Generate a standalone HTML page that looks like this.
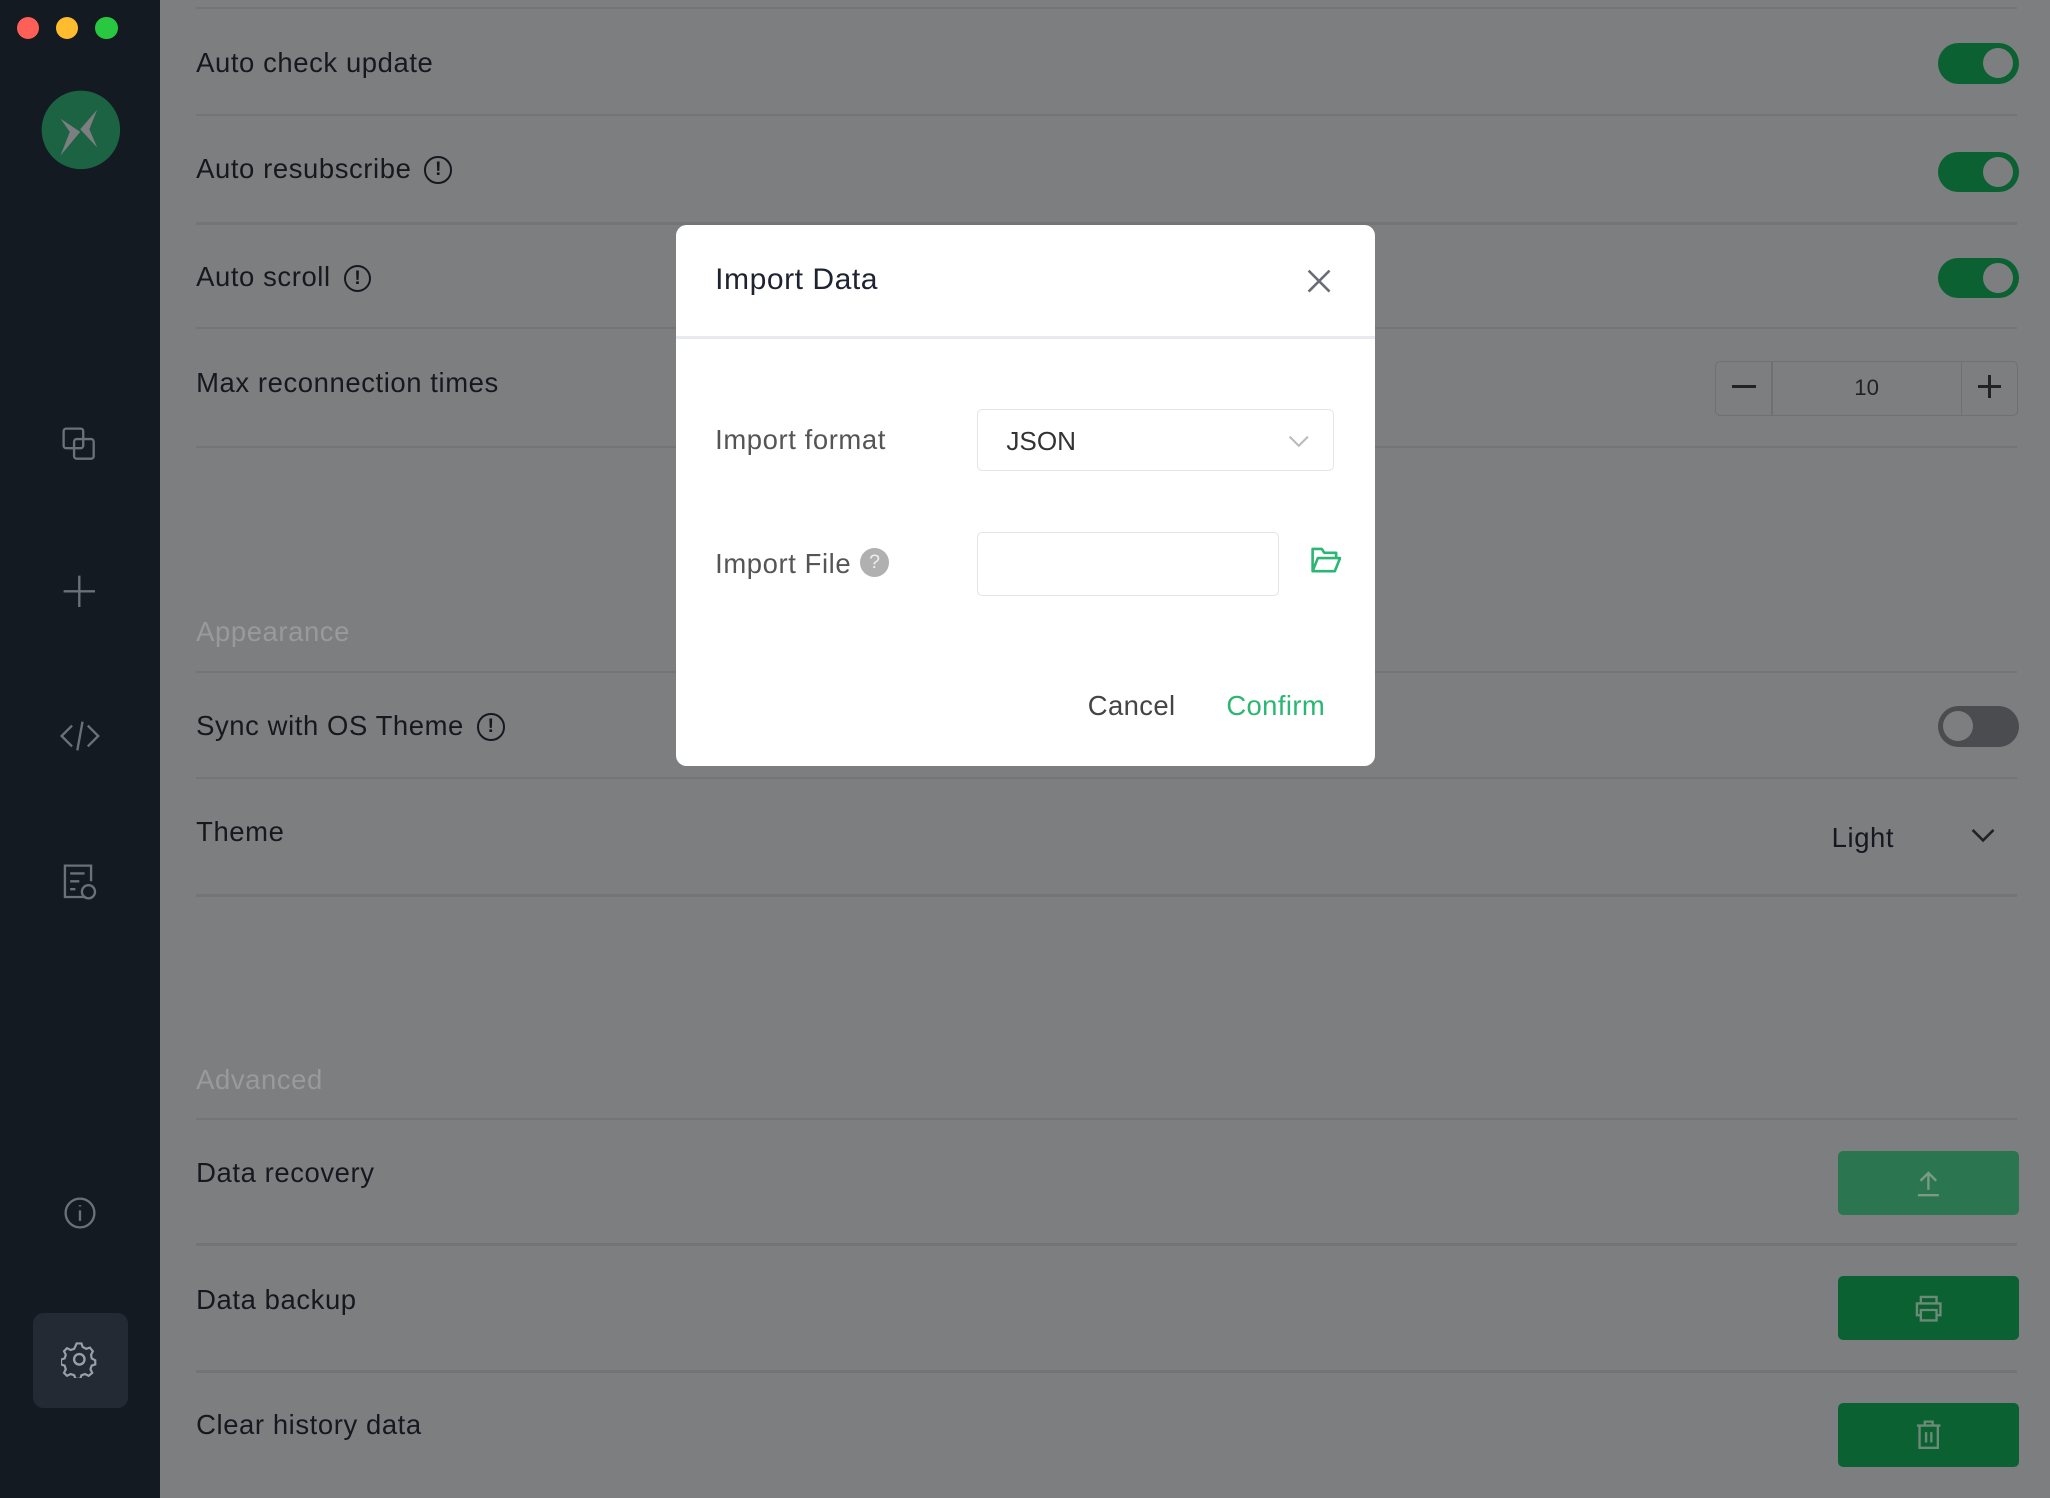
<!DOCTYPE html>
<html><head><style>
html,body{margin:0;padding:0;background:#7d7e80;overflow:hidden}
body{width:2050px;height:1498px}
#w{zoom:1.30740;width:1568px;height:1146px;position:relative;font-family:"Liberation Sans",sans-serif;color:#15191f}
.side{position:absolute;left:0;top:0;width:122px;height:1146px;background:#141a21}
.main{position:absolute;left:122px;top:0;right:0;bottom:0;background:#7d7e80}
.t{position:absolute;left:150px;font-size:21px;letter-spacing:0.45px;color:#15191f}
.h{position:absolute;left:150px;font-size:21px;letter-spacing:0.45px;color:#999a9c}
.ln{position:absolute;left:150px;right:25px;height:2px;background:#737476}
.tg{position:absolute;left:1482px;width:62px;height:31px;border-radius:16px;background:#0b6131}
.tg:after{content:"";position:absolute;right:4px;top:4px;width:23px;height:23px;border-radius:50%;background:#7d7e80}
.tg.off{background:#4a4c50}
.tg.off:after{left:4px;right:auto}
.btn{position:absolute;left:1406px;width:138px;height:49px;border-radius:4px;background:#0b6131}
.ic{position:absolute;stroke:#6b7079;fill:none;stroke-width:1.8}
.info{display:inline-block;width:18px;height:18px;border:2px solid #15191f;border-radius:50%;font-size:15px;text-align:center;line-height:18px;font-weight:bold;vertical-align:2px;margin-left:10px;letter-spacing:0}
.dlg{position:absolute;left:517px;top:172px;width:535px;height:414px;background:#fff;border-radius:8px}
.dl{position:absolute;left:30px;font-size:21px;letter-spacing:0.45px;color:#555}
</style></head><body><div id="w">
<div class="side">
<div style="position:absolute;left:13px;top:13px;width:17px;height:17px;border-radius:50%;background:#fe5f57"></div>
<div style="position:absolute;left:43px;top:13px;width:17px;height:17px;border-radius:50%;background:#febc2e"></div>
<div style="position:absolute;left:73px;top:13px;width:17px;height:17px;border-radius:50%;background:#28c840"></div>
<svg style="position:absolute;left:31px;top:69px" width="61" height="61" viewBox="0 0 61 61"><circle cx="30.5" cy="30.5" r="30" fill="#1b6343"/><path d="M15 22 L30 32 L15 50 L22 32 Z M43 15 L30 30 L43 44 L37 30 Z" fill="#7d7e80"/></svg>
<svg class="ic" style="left:47px;top:326px" width="28" height="28"><rect x="2" y="2" width="15" height="15" rx="2"/><rect x="10" y="10" width="15" height="15" rx="2"/></svg>
<svg class="ic" style="left:47px;top:438px" width="28" height="28"><path d="M14 2V26M2 14H26"/></svg>
<svg class="ic" style="left:45px;top:550px" width="32" height="26"><path d="M10 5L2 13L10 21M22 5L30 13L22 21M18 2L14 24"/></svg>
<svg class="ic" style="left:47px;top:660px" width="28" height="30"><path d="M19 26H3V2H23V14M7 8H18M7 14H14M7 20H11"/><circle cx="21" cy="22" r="5"/></svg>
<svg class="ic" style="left:48px;top:915px" width="26" height="26"><circle cx="13" cy="13" r="11"/><path d="M13 11V19M13 7V8"/></svg>
<div style="position:absolute;left:25px;top:1004px;width:73px;height:73px;border-radius:8px;background:#232a33"></div>
<svg style="position:absolute;left:47px;top:1026px" width="28" height="28" viewBox="0 0 28 28"><path d="M12 2h4l1 3 3 1.5 3-1 2.5 3-1.5 3 .5 3 3 1.5v3.5l-3 1-1 3 1.5 3-3 2.5-3-1.5-3 1-1 3h-4l-1-3-3-1-3 1.5-2.5-2.5 1.5-3-1-3-3-1v-4l3-1 1-3-1.5-3 2.5-2.5 3 1.5 3-1z" transform="scale(0.92) translate(1 0)" stroke="#9aa0a8" stroke-width="1.8" fill="none"/><circle cx="14" cy="14" r="4" stroke="#9aa0a8" stroke-width="1.8" fill="none"/></svg>
</div>
<div class="main"></div>
<div class="ln" style="top:5px"></div>
<div class="t" style="top:36px">Auto check update</div><div class="tg" style="top:33px"></div>
<div class="ln" style="top:87px"></div>
<div class="t" style="top:117px">Auto resubscribe<span class="info">!</span></div><div class="tg" style="top:116px"></div>
<div class="ln" style="top:170px"></div>
<div class="t" style="top:200px">Auto scroll<span class="info">!</span></div><div class="tg" style="top:197px"></div>
<div class="ln" style="top:250px"></div>
<div class="t" style="top:281px">Max reconnection times</div>
<div style="position:absolute;left:1312px;top:276px;width:230px;height:41px;border:1px solid #6f7072;border-radius:4px">
<div style="position:absolute;left:42px;top:0;width:1px;height:41px;background:#6f7072"></div>
<div style="position:absolute;left:187px;top:0;width:1px;height:41px;background:#6f7072"></div>
<div style="position:absolute;left:12px;top:18px;width:18px;height:2px;background:#222"></div>
<div style="position:absolute;left:0;width:230px;top:10px;text-align:center;font-size:17px;color:#222">10</div>
<div style="position:absolute;left:200px;top:18px;width:18px;height:2px;background:#222"></div>
<div style="position:absolute;left:208px;top:10px;width:2px;height:18px;background:#222"></div>
</div>
<div class="ln" style="top:341px"></div>
<div class="h" style="top:471px">Appearance</div>
<div class="ln" style="top:513px"></div>
<div class="t" style="top:543px">Sync with OS Theme<span class="info">!</span></div><div class="tg off" style="top:540px"></div>
<div class="ln" style="top:594px"></div>
<div class="t" style="top:624px">Theme</div>
<div class="t" style="left:1401px;top:629px">Light</div>
<svg style="position:absolute;left:1507px;top:632px" width="20" height="14"><path d="M2 3L10 11L18 3" stroke="#222" stroke-width="2" fill="none"/></svg>
<div class="ln" style="top:684px"></div>
<div class="h" style="top:814px">Advanced</div>
<div class="ln" style="top:855px"></div>
<div class="t" style="top:885px">Data recovery</div>
<div class="btn" style="top:880px;background:#2b7550"></div>
<svg style="position:absolute;left:1464px;top:894px" width="22" height="22"><path d="M3 20H19M11 16V3M5 9L11 3L17 9" stroke="#7a9b88" stroke-width="1.8" fill="none"/></svg>
<div class="ln" style="top:951px"></div>
<div class="t" style="top:982px">Data backup</div>
<div class="btn" style="top:976px"></div>
<svg style="position:absolute;left:1463px;top:989px" width="24" height="24"><path d="M6 8V3H18V8M6 17H3V8H21V17H18M6 13H18V21H6Z" stroke="#6c8a78" stroke-width="1.8" fill="none"/></svg>
<div class="ln" style="top:1048px"></div>
<div class="t" style="top:1078px">Clear history data</div>
<div class="btn" style="top:1073px"></div>
<svg style="position:absolute;left:1463px;top:1085px" width="24" height="24"><path d="M3 5H21M9 5V2H15V5M5 5V22H19V5M10 10V18M14 10V18" stroke="#6c8a78" stroke-width="1.8" fill="none"/></svg>
<div class="dlg">
<div style="position:absolute;left:30px;top:29px;font-size:23px;letter-spacing:0.4px;color:#1d2330">Import Data</div>
<svg style="position:absolute;left:482px;top:33px" width="20" height="20"><path d="M2 2L18 18M18 2L2 18" stroke="#6a6d75" stroke-width="2"/></svg>
<div style="position:absolute;left:0;right:0;top:85px;height:2px;background:#e8eaef"></div>
<div class="dl" style="top:152px">Import format</div>
<div style="position:absolute;left:230px;top:141px;width:272px;height:46px;border:1px solid #e3e5ea;border-radius:4px">
<div style="position:absolute;left:22px;top:12px;font-size:20px;color:#333">JSON</div>
<svg style="position:absolute;left:237px;top:18px" width="18" height="12"><path d="M2 2L9 9L16 2" stroke="#bbb" stroke-width="1.6" fill="none"/></svg>
</div>
<div class="dl" style="top:247px">Import File</div>
<div style="position:absolute;left:141px;top:247px;width:22px;height:22px;border-radius:50%;background:#b0b0b0;color:#eee;font-size:15px;text-align:center;line-height:22px">?</div>
<div style="position:absolute;left:230px;top:235px;width:230px;height:47px;border:1px solid #e3e5ea;border-radius:4px"></div>
<svg style="position:absolute;left:485px;top:245px" width="24" height="22"><path d="M2 20V3H9L11 6H20V10M2 20L6 10H23L19 20Z" stroke="#2bb673" stroke-width="2" fill="none" stroke-linejoin="round"/></svg>
<div style="position:absolute;left:315px;top:356px;font-size:21px;letter-spacing:0.3px;color:#444">Cancel</div>
<div style="position:absolute;left:421px;top:356px;font-size:21px;letter-spacing:0.3px;color:#2bb673">Confirm</div>
</div>
</div></body></html>
